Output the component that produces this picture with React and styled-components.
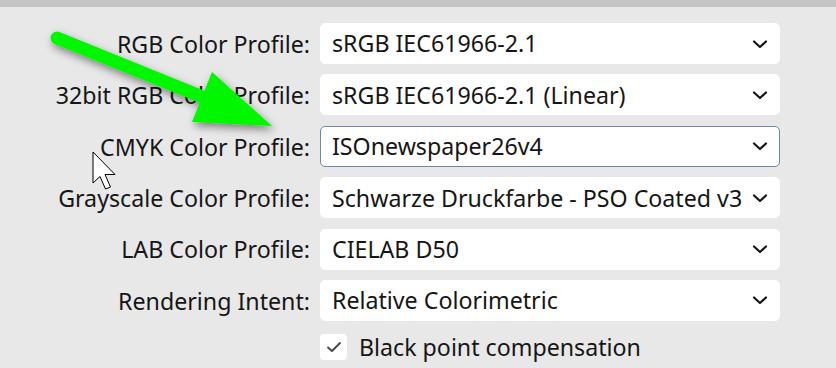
import React from "react";
import styled, { createGlobalStyle } from "styled-components";

const Global = createGlobalStyle`
  html, body { margin: 0; padding: 0; background: #e8e8e8; }
  body { font-family: "Noto Sans", "Open Sans", sans-serif; color: #161616; }
`;

const Page = styled.div`
  position: relative;
  width: 836px;
  height: 368px;
  overflow: hidden;
  background: #e8e8e8;
`;

const TopBar = styled.div`
  height: 7px;
  background: #c4c4c4;
`;

const Form = styled.div`
  display: grid;
  grid-template-columns: 310px 460px;
  column-gap: 10px;
  row-gap: 10.4px;
  padding-top: 16px;
  align-items: center;
`;

const Label = styled.div`
  text-align: right;
  font-size: 23.2px;
  white-space: nowrap;
  line-height: 1;
  padding-top: 2px;
`;

const Select = styled.div`
  display: flex;
  align-items: center;
  height: 41px;
  box-sizing: border-box;
  padding: 0 11px 0 11px;
  background: #fff;
  border-radius: 5px;
  border: 1.5px solid ${(p) => (p.$focused ? "#6b88b1" : "#fff")};
`;

const Value = styled.span`
  flex: 1;
  font-size: 23.2px;
  white-space: nowrap;
  overflow: hidden;
  line-height: 1.3;
`;

const Chevron = styled.svg`
  flex: none;
  width: 16px;
  height: 10px;
  margin-left: 6px;
`;

const CheckRow = styled.div`
  grid-column: 2;
  display: flex;
  align-items: center;
  gap: 12px;
`;

const Box = styled.div`
  width: 27px;
  height: 26px;
  border-radius: 4px;
  background: #fff;
  display: flex;
  align-items: center;
  justify-content: center;
`;

const CheckLabel = styled.span`
  font-size: 23.2px;
  white-space: nowrap;
`;

const Overlay = styled.svg`
  position: absolute;
  left: 0;
  top: 0;
  pointer-events: none;
`;

const rows = [
  ["RGB Color Profile:", "sRGB IEC61966-2.1"],
  ["32bit RGB Color Profile:", "sRGB IEC61966-2.1 (Linear)"],
  ["CMYK Color Profile:", "ISOnewspaper26v4", true],
  ["Grayscale Color Profile:", "Schwarze Druckfarbe - PSO Coated v3"],
  ["LAB Color Profile:", "CIELAB D50"],
  ["Rendering Intent:", "Relative Colorimetric"],
];

const ChevronIcon = () => (
  <Chevron viewBox="0 0 16 10">
    <path d="M2 2.5 L8 8 L14 2.5" fill="none" stroke="#161616" strokeWidth="2.2" strokeLinecap="round" strokeLinejoin="round" />
  </Chevron>
);

export default function App() {
  return (
    <Page>
      <Global />
      <TopBar />
      <Form>
        {rows.map(([l, v, f]) => (
          <React.Fragment key={l}>
            <Label>{l}</Label>
            <Select $focused={f}>
              <Value>{v}</Value>
              <ChevronIcon />
            </Select>
          </React.Fragment>
        ))}
        <CheckRow>
          <Box>
            <svg width="16" height="12" viewBox="0 0 16 12">
              <path d="M2 6.5 L6 10 L14 2" fill="none" stroke="#444" strokeWidth="1.8" strokeLinecap="round" strokeLinejoin="round" />
            </svg>
          </Box>
          <CheckLabel>Black point compensation</CheckLabel>
        </CheckRow>
      </Form>
      <Overlay width="836" height="368" viewBox="0 0 836 368">
        <defs>
          <filter id="sh" x="-20%" y="-20%" width="140%" height="160%">
            <feDropShadow dx="2" dy="4" stdDeviation="4" floodColor="#000" floodOpacity="0.45" />
          </filter>
        </defs>
        <g filter="url(#sh)">
          <line x1="57" y1="38" x2="215" y2="102" stroke="#00f700" strokeWidth="13" strokeLinecap="round" />
          <polygon points="212,72 272,126 192,122" fill="#00f700" />
        </g>
        <path
          d="M93 152 L93 183 L100 176.5 L105.5 189 L110.5 187 L105 174.5 L115 174.5 Z"
          fill="#fff"
          stroke="#000"
          strokeWidth="1"
          strokeLinejoin="miter"
        />
      </Overlay>
    </Page>
  );
}
